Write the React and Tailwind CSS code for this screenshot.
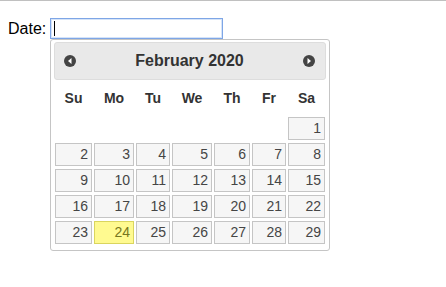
import React from "react";

const cols = "grid grid-cols-[37px_40px_34px_40px_36px_34px_37px] gap-x-[2px]";

const days = ["Su", "Mo", "Tu", "We", "Th", "Fr", "Sa"];

function NavIcon({ dir }) {
  return (
    <svg width="12" height="12" viewBox="0 0 12 12" className="block">
      <circle cx="6" cy="6" r="6" fill="#444444" />
      {dir === "prev" ? (
        <polygon points="7.5,3 7.5,9 4,6" fill="#ffffff" />
      ) : (
        <polygon points="4.5,3 4.5,9 8,6" fill="#ffffff" />
      )}
    </svg>
  );
}

export default function App() {
  const cells = [];
  for (let i = 0; i < 6; i++) cells.push(null);
  for (let d = 1; d <= 29; d++) cells.push(d);

  return (
    <div
      className="relative w-[446px] h-[287px] bg-white border-t border-[#c0c0c0] overflow-hidden"
      style={{ fontFamily: '"Liberation Sans", Arial, sans-serif' }}
    >
      <div className="flex items-center pt-[17px] pl-[8px]">
        <span className="w-[42px] text-[16px] leading-[21px] text-black">Date:</span>
        <div className="relative w-[173px] h-[21px] border border-[#7ea6e6] bg-white shadow-[inset_0_0_0_1px_#d6e4f8]">
          <span className="absolute left-[3px] top-[2px] w-[1px] h-[15px] bg-black" />
        </div>
      </div>

      <div className="absolute left-[50px] top-[38px] w-[280px] border border-[#c5c5c5] rounded-[3px] bg-white pt-[2px] px-[3px] pb-[6px]">
        <div className="flex items-center h-[38px] border border-[#dddddd] bg-[#e9e9e9] rounded-[3px] pl-[9px] pr-[10px]">
          <NavIcon dir="prev" />
          <div className="flex-1 text-center text-[16px] font-bold text-[#333333]">February 2020</div>
          <NavIcon dir="next" />
        </div>

        <div className={`${cols} px-[1px] h-[37px] items-center`}>
          {days.map((d) => (
            <div key={d} className="text-center text-[14px] font-bold text-[#333333]">
              {d}
            </div>
          ))}
        </div>

        <div className={`${cols} gap-y-[3px] px-[1px]`}>
          {cells.map((d, i) =>
            d === null ? (
              <div key={i} className="h-[23px]" />
            ) : d === 24 ? (
              <div
                key={i}
                className="h-[23px] flex items-center justify-end pr-[3px] border border-[#dad55e] bg-[#fffa90] text-[#777620] text-[14px]"
              >
                {d}
              </div>
            ) : (
              <div
                key={i}
                className="h-[23px] flex items-center justify-end pr-[3px] border border-[#c5c5c5] bg-[#f6f6f6] text-[#454545] text-[14px]"
              >
                {d}
              </div>
            )
          )}
        </div>
      </div>
    </div>
  );
}
